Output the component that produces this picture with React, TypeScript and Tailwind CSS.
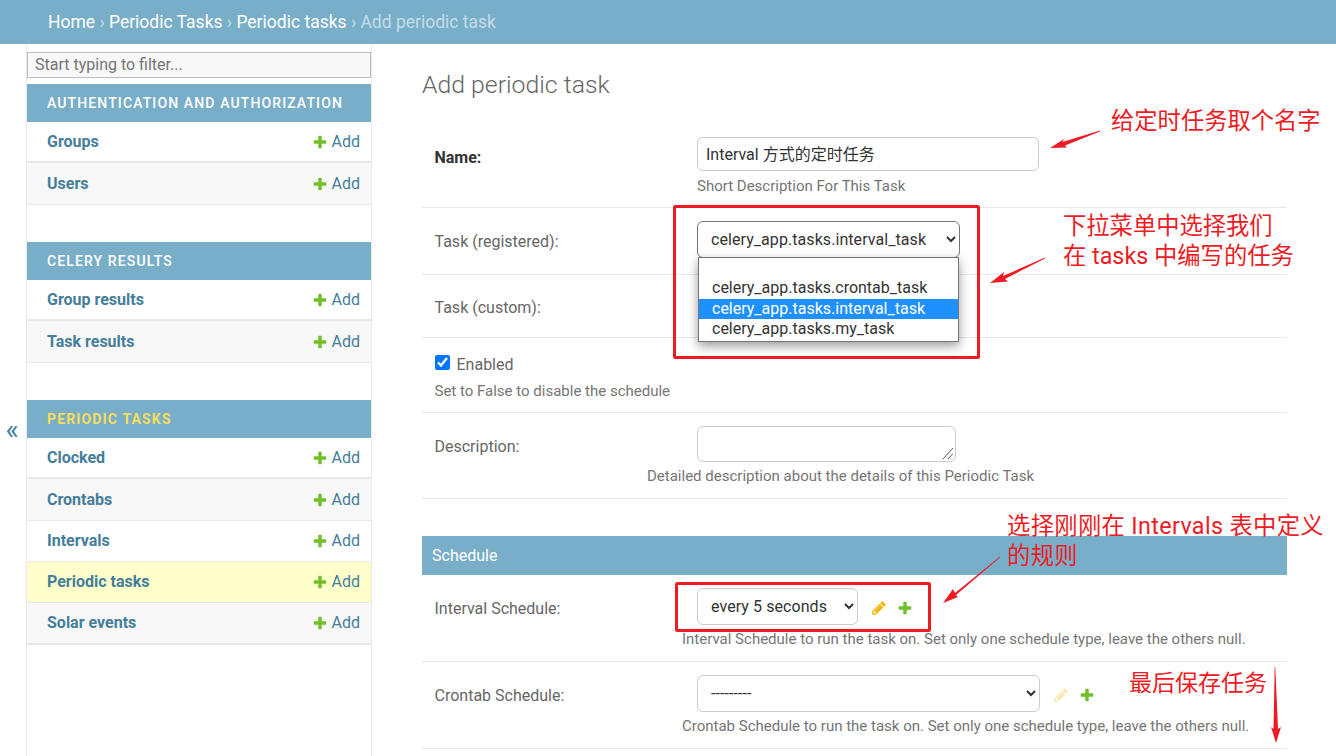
import React from "react";

const font = { fontFamily: "Roboto, 'Noto Sans CJK SC', sans-serif" };

function PlusIcon() {
  return (
    <svg viewBox="0 0 1792 1792" className="h-[16px] w-[16px]">
      <path fill="#70bf2b" d="M1600 796v192q0 40-28 68t-68 28h-416v416q0 40-28 68t-68 28h-192q-40 0-68-28t-28-68v-416h-416q-40 0-68-28t-28-68v-192q0-40 28-68t68-28h416v-416q0-40 28-68t68-28h192q40 0 68 28t28 68v416h416q40 0 68 28t28 68z" />
    </svg>
  );
}

function PencilIcon({ faded }: { faded?: boolean }) {
  return (
    <svg viewBox="0 0 1792 1792" className={`h-[16px] w-[16px] ${faded ? "opacity-30" : ""}`}>
      <path fill="#efb80b" d="M491 1536l91-91-235-235-91 91v107h128v128h107zm523-928q0-22-22-22-10 0-17 7l-542 542q-7 7-7 17 0 22 22 22 10 0 17-7l542-542q7-7 7-17zm-54-192l416 416-832 832h-416v-416zm683 96q0 53-37 90l-166 166-416-416 166-165q36-38 90-38 53 0 91 38l235 234q37 39 37 91z" />
    </svg>
  );
}

function SideRow({ name, tint, current, h = "h-[41px]" }: { name: string; tint?: boolean; current?: boolean; h?: string }) {
  return (
    <div className={`flex ${h} items-center justify-between border-b border-[#e8e8e8] pl-5 pr-[11px] text-[16px] ${current ? "bg-[#ffffcc]" : tint ? "bg-[#f8f8f8]" : "bg-white"}`}>
      <span className="font-bold text-[#447e9b]">{name}</span>
      <span className="flex items-center gap-[4px] text-[#447e9b]">
        <PlusIcon />
        Add
      </span>
    </div>
  );
}

function SideHead({ title, current }: { title: string; current?: boolean }) {
  return (
    <div className={`flex h-[38px] items-center bg-[#79aec8] pl-5 text-[14px] ${current ? "font-bold tracking-[1.15px] text-[#f5dd5d]" : "font-medium tracking-[1.12px] text-white"}`}>
      {title}
    </div>
  );
}

function Sidebar() {
  return (
    <aside className="flex w-[346px] shrink-0 flex-col border-x border-[#eaeaea]">
      <div className="pb-[6px] pt-2">
        <div className="flex h-[26px] items-center border border-[#bdbdbd] bg-[#f8f8f8] px-[7px] text-[16px] text-[#757575]">
          Start typing to filter...
        </div>
      </div>
      <SideHead title="AUTHENTICATION AND AUTHORIZATION" />
      <SideRow name="Groups" h="h-[41px] border-b-2" />
      <SideRow name="Users" tint h="h-[42px]" />
      <div className="h-[37px]" />
      <SideHead title="CELERY RESULTS" />
      <SideRow name="Group results" h="h-[41px] border-b-2" />
      <SideRow name="Task results" tint h="h-[42px]" />
      <div className="h-[37px]" />
      <SideHead title="PERIODIC TASKS" current />
      <SideRow name="Clocked" h="h-[41px] border-b-2" />
      <SideRow name="Crontabs" tint h="h-[42px]" />
      <SideRow name="Intervals" />
      <SideRow name="Periodic tasks" current />
      <SideRow name="Solar events" tint h="h-[42px] border-b-2" />
    </aside>
  );
}

function FormRow({ label, bold, h, children }: { label: string; bold?: boolean; h: string; children: React.ReactNode }) {
  return (
    <div className={`relative flex ${h} border-b border-[#e8e8e8] pl-[12.5px]`}>
      <label className={`w-[262.5px] shrink-0 text-[16px] ${bold ? "font-bold text-[#333333]" : "text-[#666666]"}`}>{label}</label>
      <div className="min-w-0 flex-1">{children}</div>
    </div>
  );
}

function Help({ children, className = "" }: { children: React.ReactNode; className?: string }) {
  return <p className={`whitespace-nowrap text-[15px] leading-[18px] text-[#757575] ${className}`}>{children}</p>;
}

const selectClass = "rounded-[6px] border border-[#cccccc] bg-white pl-[9px] text-[16px] tracking-[0.07px] text-[#333333]";

function Annotations() {
  return (
    <>
      <svg className="pointer-events-none absolute left-0 top-0 h-[756px] w-[1336px]" viewBox="0 0 1336 756">
        <g fill="none" stroke="#ed1c24">
          <rect x="674.5" y="206.5" width="304" height="151" strokeWidth="3" rx="1" />
          <rect x="676.5" y="583.5" width="253" height="47" strokeWidth="3" rx="1" />
        </g>
        <g fill="#ed1c24">
          <path d="M1100 130.5 1062.5 142 1064 139 1050 148 1067 147.5 1065 145.5 1100 131.5Z" />
          <path d="M1045 257.5 1003 276 1004 272 990 283 1008 281.5 1005 279 1045 258.5Z" />
          <path d="M1000 556.5 955 593 953 589 943 603 958 597 956 595 1000 557.5Z" />
          <path d="M1274.7 667 1273.5 729 1271 727 1276 743 1281 727 1278 729 1275.3 667Z" />
        </g>
      </svg>
      <p className="absolute left-[1111px] top-[106px] whitespace-nowrap text-[23.3px] leading-[30px] text-[#ed1c24]">给定时任务取个名字</p>
      <p className="absolute left-[1063px] top-[211px] whitespace-nowrap text-[23.3px] leading-[30px] text-[#ed1c24]">
        下拉菜单中选择我们
        <br />在 tasks 中编写的任务
      </p>
      <p className="absolute left-[1007px] top-[511px] whitespace-nowrap text-[23.3px] leading-[30px] tracking-[0.35px] text-[#ed1c24]">
        选择刚刚在 Intervals 表中定义
        <br />的规则
      </p>
      <p className="absolute left-[1129px] top-[669px] whitespace-nowrap text-[23px] leading-[30px] text-[#ed1c24]">最后保存任务</p>
    </>
  );
}

export default function App() {
  return (
    <div className="relative h-[756px] w-[1336px] overflow-hidden bg-white" style={font}>
      <header className="flex h-[44px] items-center bg-[#79aec8] pl-12 text-[17.5px] text-white">
        <span>Home</span>
        <span className="px-[4.3px] text-[#c4dce8]">›</span>
        <span>Periodic Tasks</span>
        <span className="px-[4.3px] text-[#c4dce8]">›</span>
        <span>Periodic tasks</span>
        <span className="px-[4.3px] text-[#c4dce8]">›</span>
        <span className="text-[#c4dce8]">Add periodic task</span>
      </header>

      <div className="flex h-[712px]">
        <div className="flex w-[26px] shrink-0 items-center justify-center pr-[2px] pt-[60px] text-[28px] leading-none text-[#447e9b]">«</div>
        <Sidebar />
        <main className="ml-[50px] w-[865px] shrink-0">
          <h1 className="pt-[26px] text-[24.8px] font-light leading-[30px] text-[#666666]">Add periodic task</h1>

          <div className="mt-[8px]">
            <FormRow label="Name:" bold h="h-[100px] pt-[38px]">
              <div className="-mt-[9px] flex h-[34px] w-[342px] items-center rounded-[6px] border border-[#cccccc] pl-2 pt-[2px] text-[16px] text-[#333333]">
                Interval 方式的定时任务
              </div>
              <Help className="mt-[6px]">Short Description For This Task</Help>
            </FormRow>

            <FormRow label="Task (registered):" h="h-[67px] pt-[22px]">
              <select defaultValue="interval" className={`-mt-[9px] block h-[37px] w-[263px] !border-[#767676] ${selectClass}`}>
                <option value="interval">celery_app.tasks.interval_task</option>
              </select>
              <div className="absolute left-[276px] top-[49px] z-10 w-[261px] border border-[#767676] bg-white pb-px pt-[20px] text-[16px] leading-[20.5px] text-[#333333] shadow-[0_4px_10px_rgba(0,0,0,0.4)]">
                <div className="pl-[13px]">celery_app.tasks.crontab_task</div>
                <div className="bg-[#1e90ff] pl-[13px] text-white">celery_app.tasks.interval_task</div>
                <div className="pl-[13px]">celery_app.tasks.my_task</div>
              </div>
            </FormRow>

            <FormRow label="Task (custom):" h="h-[63px] pt-[21px]">
              <div />
            </FormRow>

            <div className="flex h-[75px] flex-col border-b border-[#e8e8e8] pl-[12.5px] pt-[17px]">
              <label className="flex h-[20px] items-center text-[16px] leading-[20px] text-[#666666]">
                <input type="checkbox" defaultChecked className="mb-[6px] mr-[7px] h-[15px] w-[15px] accent-[#0075ff]" />
                Enabled
              </label>
              <Help className="mt-[7px]">Set to False to disable the schedule</Help>
            </div>

            <FormRow label="Description:" h="h-[86px] pt-[22px]">
              <div className="relative -mt-[9px] h-[36px] w-[259px]">
                <textarea readOnly className="block h-[36px] w-[259px] resize-none rounded-[6px] border border-[#cccccc]" />
                <svg viewBox="0 0 10 11" className="absolute bottom-[3px] right-[3px] h-[11px] w-[10px]">
                  <path d="M0 11 10 0M5 11 10 5.5" stroke="#555555" strokeWidth="1" fill="none" />
                </svg>
              </div>
              <Help className="-ml-[50px] mt-[5px]">Detailed description about the details of this Periodic Task</Help>
            </FormRow>
          </div>

          <h2 className="mt-[37px] flex h-[39px] items-center bg-[#79aec8] pl-[10px] text-[16px] text-white">Schedule</h2>

          <FormRow label="Interval Schedule:" h="h-[87px] pt-[22px]">
            <div className="-mt-[9px] flex items-center">
              <select defaultValue="5" className={`h-[37px] w-[161px] ${selectClass}`}>
                <option value="5">every 5 seconds</option>
              </select>
              <span className="ml-[13px] mt-[3px] flex items-center gap-[10px]">
                <PencilIcon />
                <PlusIcon />
              </span>
            </div>
            <Help className="-ml-[15px] mt-[5px]">Interval Schedule to run the task on. Set only one schedule type, leave the others null.</Help>
          </FormRow>

          <FormRow label="Crontab Schedule:" h="h-[87px] pt-[22px]">
            <div className="-mt-[9px] flex items-center">
              <select defaultValue="" className={`h-[37px] w-[343px] ${selectClass}`}>
                <option value="">---------</option>
              </select>
              <span className="ml-[13px] mt-[3px] flex items-center gap-[10px]">
                <PencilIcon faded />
                <PlusIcon />
              </span>
            </div>
            <Help className="-ml-[15px] mt-[5px]">Crontab Schedule to run the task on. Set only one schedule type, leave the others null.</Help>
          </FormRow>
        </main>
      </div>

      <Annotations />
    </div>
  );
}
